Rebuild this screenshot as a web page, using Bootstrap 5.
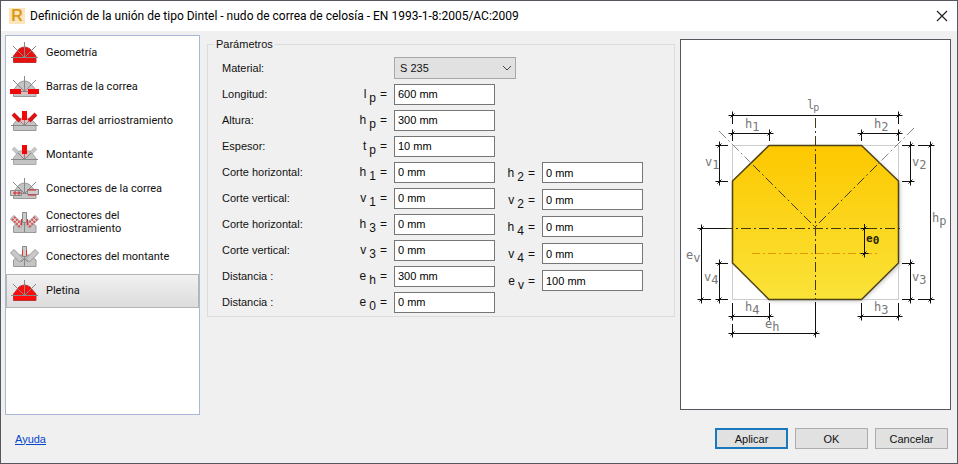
<!DOCTYPE html>
<html lang="es">
<head>
<meta charset="utf-8">
<meta name="viewport" content="width=device-width, initial-scale=1">
<title>Definición de la unión</title>
<link href="https://cdn.jsdelivr.net/npm/bootstrap@5.3.0/dist/css/bootstrap.min.css" rel="stylesheet">
<style>
  body { font-family: "Liberation Sans", Arial, sans-serif; font-size: 11px; line-height: 14px; color: #111; background: #f0f0f0; }
  .dialog { min-height: 100vh; border: 1px solid #55565e; background: #f0f0f0; }
  .titlebar { height: 30px; background: #fff; padding: 0 9px 0 8px; }
  .app-logo { width: 16px; height: 16px; background: #fbe6bb; color: #dd9a1c; font-size: 16px; line-height: 16px; }
  .window-title { font-family: Roboto, "Open Sans", sans-serif; font-size: 12px; line-height: 18px; color: #000; padding-left: 5px; }
  .close-btn { line-height: 0; }
  .workspace { padding: 4px 6px 0 4px; }
  .sections { width: 195px; height: 380px; background: #fff; border: 1px solid #a9b8d6; font-family: Roboto, "Open Sans", sans-serif; }
  .sections .list-group-item { height: 34px; padding: 0 8px 2px 2px; gap: 7px; border: 1px solid transparent; background: none; color: #111; font-size: 11px; line-height: 13px; }
  .sections .list-group-item.selected { background: linear-gradient(#f1f1f1, #dcdcdc); border-color: #b4b4b4; }
  .section-icon { width: 30px; height: 24px; }
  .params { margin: 3px 5px 0 7px; height: 279px; border: 1px solid #dcdcdc; padding: 0 0 0 14px; }
  .params legend { float: none; width: auto; font-size: 11px; line-height: 12px; margin: -6px 0 5px -8px; padding: 0 2px; background: #f0f0f0; }
  .param-row { height: 26px; }
  .param-name { width: 123px; }
  .param-symbol { width: 42px; font-size: 12px; gap: 3px; }
  .param-symbol .idx { margin: 4px 1px -4px 0; }
  .second-fields { padding-top: 78px; margin-left: 9px; }
  .second-fields .param-row { height: 27px; }
  .second-fields .param-symbol { width: 31px; }
  .dialog .form-control { width: 101px; height: 21px; padding: 0 3px; border: 1px solid #767676; border-radius: 0; font-size: 11px; line-height: 14px; color: #000; background: #fff; }
  .param-row .form-control, .material-box { margin-left: 3px; }
  .material-box { width: 122px; }
  .dialog .form-select { height: 22px; padding: 0 20px 0 5px; border: 1px solid #a8a8a8; border-radius: 0; background: #e1e1e1; font-size: 11px; line-height: 14px; color: #111; }
  .select-arrow { right: 4px; top: 8px; pointer-events: none; }
  .preview { width: 271px; margin-top: 4px; height: 371px; background: #fff; border: 1px solid #55565e; }
  .preview text { font-family: "DejaVu Sans Mono", monospace; font-size: 12px; fill: #777; }
  .preview .strong-label { font-size: 11px; font-weight: bold; fill: #2a2400; }
  .preview .dim { stroke: #111; fill: none; }
  .footer-bar { padding: 13px 9px 13px 14px; }
  .footer-bar a { color: #0645c8; }
  .footer-buttons { gap: 7px; }
  .footer-bar .btn { width: 73px; height: 21px; padding: 0; border: 1px solid #adadad; border-radius: 0; background: #e1e1e1; font-size: 11px; line-height: 14px; color: #111; }
  .footer-bar .btn.default { border: 2px solid #1a78bd; }
</style>
<script src="https://cdn.jsdelivr.net/npm/bootstrap@5.3.0/dist/js/bootstrap.bundle.min.js"></script>
</head>
<body>
<svg class="d-none" aria-hidden="true">
  <defs>
    <path id="body-shape" d="M4.500 22.500V16L10 9Q15.500 5 21 9L27 16V22.500Z"/>
    <path id="axes" d="M2 17.500H29M15.500 2V18M4 6L15 17M27 6L16 17" fill="none" stroke="#888"/>
    <path id="tick" d="M-4 0H4M0 -4V4M-2 2L2 -2" fill="none" stroke="#111"/>
  </defs>
</svg>
<div class="dialog d-flex flex-column">
  <header class="titlebar d-flex align-items-center">
    <span class="app-logo fw-bold text-center" aria-hidden="true">R</span>
    <h1 class="window-title fw-normal mb-0 flex-grow-1">Definición de la unión de tipo Dintel - nudo de correa de celosía - EN 1993-1-8:2005/AC:2009</h1>
    <button type="button" class="close-btn border-0 bg-transparent p-0" aria-label="Cerrar">
      <svg width="12" height="12" viewBox="0 0 12 12"><path d="M1 1L11 11M11 1L1 11" stroke="#222" stroke-width="1.200"/></svg>
    </button>
  </header>

  <main class="workspace d-flex align-items-start">
    <nav class="sections list-group rounded-0 flex-shrink-0">
      <button type="button" class="list-group-item list-group-item-action d-flex align-items-center">
        <svg class="section-icon flex-shrink-0" viewBox="0 0 30 24"><use href="#body-shape" fill="#e80f0f" stroke="#b33"/><use href="#axes"/></svg>Geometría</button>
      <button type="button" class="list-group-item list-group-item-action d-flex align-items-center">
        <svg class="section-icon flex-shrink-0" viewBox="0 0 30 24"><use href="#body-shape" fill="#c4c4c4" stroke="#999"/><path d="M10 15h11v5H10z" fill="#e9b9b9"/><use href="#axes"/><path d="M1 15h11v5H1zM19 15h11v5H19z" fill="#f00808"/></svg>Barras de la correa</button>
      <button type="button" class="list-group-item list-group-item-action d-flex align-items-center">
        <svg class="section-icon flex-shrink-0" viewBox="0 0 30 24"><path d="M4.500 22.500V16L8 12L15.500 9L23 12L27 16V22.500Z" fill="#c4c4c4" stroke="#999"/><path d="M9 13L15.500 9L22 13L15.500 17Z" fill="#eab8b8"/><path d="M2 17.500H29M15.500 10V18M9 11L15 17M22 11L16 17" stroke="#888" fill="none"/><path d="M13 3h5v9h-5z" fill="#f00808"/><path d="M4 6L11 13M27 6L20 13" stroke="#d91313" stroke-width="4"/></svg>Barras del arriostramiento</button>
      <button type="button" class="list-group-item list-group-item-action d-flex align-items-center">
        <svg class="section-icon flex-shrink-0" viewBox="0 0 30 24"><path d="M4 6L11 13M27 6L20 13" stroke="#c6c6c6" stroke-width="4"/><path d="M4.500 22.500V16L10 9H21L27 16V22.500Z" fill="#c4c4c4" stroke="#aaa"/><path d="M12 12h7v3h-7z" fill="#eab8b8"/><path d="M2 17.500H29M15.500 10V18M9 11L15 17M22 11L16 17" stroke="#888" fill="none"/><path d="M13 3h5v9h-5z" fill="#f00808"/></svg>Montante</button>
      <button type="button" class="list-group-item list-group-item-action d-flex align-items-center">
        <svg class="section-icon flex-shrink-0" viewBox="0 0 30 24"><use href="#body-shape" fill="#c4c4c4" stroke="#999"/><use href="#axes"/><path d="M1.500 14.500h11v5h-11zM18.500 13.500h11v5h-11z" fill="#ccc" stroke="#888"/><path d="M4 17h4M6 15v4M8 17h4M10 15v4M19 14h8M19 19h8" stroke="#d5222b"/></svg>Conectores de la correa</button>
      <button type="button" class="list-group-item list-group-item-action d-flex align-items-center">
        <svg class="section-icon flex-shrink-0" viewBox="0 0 30 24"><path d="M4.500 22.500V16L10 11H21L27 16V22.500Z" fill="#c4c4c4" stroke="#999"/><path d="M1.500 9L5 5.500L14 14.500L10.500 18ZM29.500 9L26 5.500L17 14.500L20.500 18Z" fill="#ddd" stroke="#999"/><path d="M3 9L11 17M5 7L13 15M28 9L20 17M26 7L18 15" stroke="#d84a50" stroke-width="2" stroke-dasharray="2 1"/><path d="M13.500 2.500h4v10h-4z" fill="#ccc" stroke="#888"/><path d="M12.500 9v6M18.500 9v6" stroke="#d33"/><path d="M15.500 13V22" stroke="#888"/></svg>Conectores del arriostramiento</button>
      <button type="button" class="list-group-item list-group-item-action d-flex align-items-center">
        <svg class="section-icon flex-shrink-0" viewBox="0 0 30 24"><path d="M4.500 22.500V16L10 11H21L27 16V22.500Z" fill="#c4c4c4" stroke="#999"/><path d="M1.500 9L5 5.500L14 14.500L10.500 18ZM29.500 9L26 5.500L17 14.500L20.500 18Z" fill="#c8c8c8" stroke="#999"/><path d="M13.500 2.500h4v10h-4z" fill="#ccc" stroke="#888"/><path d="M13.500 6v6M17.500 6v6" stroke="#d33"/><path d="M15.500 13V22M12 18l3.500-3.500L19 18" fill="none" stroke="#888"/></svg>Conectores del montante</button>
      <button type="button" class="list-group-item list-group-item-action selected d-flex align-items-center" aria-current="true">
        <svg class="section-icon flex-shrink-0" viewBox="0 0 30 24"><use href="#body-shape" fill="#ff0a0a" stroke="#b33"/><use href="#axes"/></svg>Pletina</button>
    </nav>

    <fieldset class="params flex-grow-1">
      <legend>Parámetros</legend>
      <div class="param-row d-flex align-items-center"><label class="param-name" for="material">Material:</label><span class="param-symbol me-1"></span>
        <div class="material-box position-relative"><select id="material" class="form-select"><option>S 235</option></select>
          <svg class="select-arrow position-absolute" width="10" height="7" viewBox="0 0 10 7"><path d="M1 1L5 5L9 1" fill="none" stroke="#444"/></svg></div></div>
      <div class="d-flex align-items-start">
        <div>
          <div class="param-row d-flex align-items-center"><label class="param-name" for="lp">Longitud:</label><span class="param-symbol d-flex justify-content-end me-1"><span>l</span><span class="idx">p</span><span>=</span></span><input id="lp" class="form-control" value="600 mm"></div>
          <div class="param-row d-flex align-items-center"><label class="param-name" for="hp">Altura:</label><span class="param-symbol d-flex justify-content-end me-1"><span>h</span><span class="idx">p</span><span>=</span></span><input id="hp" class="form-control" value="300 mm"></div>
          <div class="param-row d-flex align-items-center"><label class="param-name" for="tp">Espesor:</label><span class="param-symbol d-flex justify-content-end me-1"><span>t</span><span class="idx">p</span><span>=</span></span><input id="tp" class="form-control" value="10 mm"></div>
          <div class="param-row d-flex align-items-center"><label class="param-name" for="h1">Corte horizontal:</label><span class="param-symbol d-flex justify-content-end me-1"><span>h</span><span class="idx">1</span><span>=</span></span><input id="h1" class="form-control" value="0 mm"></div>
          <div class="param-row d-flex align-items-center"><label class="param-name" for="v1">Corte vertical:</label><span class="param-symbol d-flex justify-content-end me-1"><span>v</span><span class="idx">1</span><span>=</span></span><input id="v1" class="form-control" value="0 mm"></div>
          <div class="param-row d-flex align-items-center"><label class="param-name" for="h3">Corte horizontal:</label><span class="param-symbol d-flex justify-content-end me-1"><span>h</span><span class="idx">3</span><span>=</span></span><input id="h3" class="form-control" value="0 mm"></div>
          <div class="param-row d-flex align-items-center"><label class="param-name" for="v3">Corte vertical:</label><span class="param-symbol d-flex justify-content-end me-1"><span>v</span><span class="idx">3</span><span>=</span></span><input id="v3" class="form-control" value="0 mm"></div>
          <div class="param-row d-flex align-items-center"><label class="param-name" for="eh">Distancia :</label><span class="param-symbol d-flex justify-content-end me-1"><span>e</span><span class="idx">h</span><span>=</span></span><input id="eh" class="form-control" value="300 mm"></div>
          <div class="param-row d-flex align-items-center"><label class="param-name" for="e0">Distancia :</label><span class="param-symbol d-flex justify-content-end me-1"><span>e</span><span class="idx">0</span><span>=</span></span><input id="e0" class="form-control" value="0 mm"></div>
        </div>
        <div class="second-fields flex-shrink-0">
          <div class="param-row d-flex align-items-center"><label class="param-symbol d-flex justify-content-end me-1" for="h2"><span>h</span><span class="idx">2</span><span>=</span></label><input id="h2" class="form-control" value="0 mm"></div>
          <div class="param-row d-flex align-items-center"><label class="param-symbol d-flex justify-content-end me-1" for="v2"><span>v</span><span class="idx">2</span><span>=</span></label><input id="v2" class="form-control" value="0 mm"></div>
          <div class="param-row d-flex align-items-center"><label class="param-symbol d-flex justify-content-end me-1" for="h4"><span>h</span><span class="idx">4</span><span>=</span></label><input id="h4" class="form-control" value="0 mm"></div>
          <div class="param-row d-flex align-items-center"><label class="param-symbol d-flex justify-content-end me-1" for="v4"><span>v</span><span class="idx">4</span><span>=</span></label><input id="v4" class="form-control" value="0 mm"></div>
          <div class="param-row d-flex align-items-center"><label class="param-symbol d-flex justify-content-end me-1" for="ev"><span>e</span><span class="idx">v</span><span>=</span></label><input id="ev" class="form-control" value="100 mm"></div>
        </div>
      </div>
    </fieldset>

    <div class="preview flex-shrink-0">
      <svg class="d-block w-100 h-100" viewBox="681 40 269 369" role="img" aria-label="Esquema de la pletina">
        <defs>
          <linearGradient id="plate" x1="0" y1="0" x2="0" y2="1"><stop offset="0" stop-color="#fdc800"/><stop offset="1" stop-color="#fae338"/></linearGradient>
          <filter id="soft" x="-10%" y="-10%" width="120%" height="120%"><feGaussianBlur stdDeviation="2"/></filter>
        </defs>
        <path d="M770 147H862L900 183V265L862 301H770L734 265V183Z" fill="#999" opacity=".6" filter="url(#soft)"/>
        <path d="M732.500 145.500V181L769 145.500ZM732.500 299.500V263L769 299.500Z" fill="#fff"/>
        <path d="M732.500 145.500H898.500V299.500H732.500Z" fill="none" stroke="#ccc"/>
        <path d="M769 145.500H861.500L898.500 181V263L861.500 299.500H769L732.500 263V181Z" fill="url(#plate)" stroke="#4d4215" stroke-width="1.500"/>
        <path d="M719 131L753 165M914 128L877 165" stroke="#888" stroke-dasharray="10 3 2 3"/>
        <path d="M753 165L815 227M877 165L815 227" stroke="#443a10" stroke-dasharray="10 3 2 3"/>
        <path d="M815.500 118V299M723 228.500H903" stroke="#443a10" stroke-dasharray="10 3 2 3"/>
        <path d="M752 253.500H877" stroke="#e29a00" stroke-dasharray="8 3 2 3"/>
        <path class="dim" d="M732.500 115.500H898.500M732.500 115V124M898.500 115V124M732.500 133.500H769.500M861.500 133.500H898.500M732.500 130V141M769.500 130V141M861.500 130V141M898.500 130V141
          M719.500 145V181M716 145.500H728M716 181.500H728M910.500 145V181M902 145.500H913M902 181.500H913M930.500 145V299M918 145.500H934M918 299.500H934
          M719.500 263V299M716 263.500H728M716 299.500H728M701.500 228V299M699 228.500H726M699 299.500H711M910.500 263V299M902 263.500H913M902 299.500H913
          M732.500 316.500H769.500M861.500 316.500H898.500M732.500 303V319M732.500 324V336M769.500 303V319M861.500 303V319M898.500 303V319M732.500 333.500H815.500M815.500 302V336M864.500 224V257"/>
        <g><use href="#tick" x="732.500" y="115.500"/><use href="#tick" x="898.500" y="115.500"/><use href="#tick" x="732.500" y="133.500"/><use href="#tick" x="769.500" y="133.500"/><use href="#tick" x="861.500" y="133.500"/><use href="#tick" x="898.500" y="133.500"/>
        <use href="#tick" x="719.500" y="145.500"/><use href="#tick" x="719.500" y="181.500"/><use href="#tick" x="910.500" y="145.500"/><use href="#tick" x="910.500" y="181.500"/><use href="#tick" x="930.500" y="145.500"/><use href="#tick" x="930.500" y="299.500"/>
        <use href="#tick" x="719.500" y="263.500"/><use href="#tick" x="719.500" y="299.500"/><use href="#tick" x="701.500" y="228.500"/><use href="#tick" x="701.500" y="299.500"/><use href="#tick" x="910.500" y="263.500"/><use href="#tick" x="910.500" y="299.500"/>
        <use href="#tick" x="732.500" y="316.500"/><use href="#tick" x="769.500" y="316.500"/><use href="#tick" x="861.500" y="316.500"/><use href="#tick" x="898.500" y="316.500"/><use href="#tick" x="732.500" y="333.500"/><use href="#tick" x="815.500" y="333.500"/><use href="#tick" x="864.500" y="228.500"/><use href="#tick" x="864.500" y="253.500"/></g>
        <text x="807" y="109">l<tspan font-size="10" dx="-1" dy="2">p</tspan></text>
        <text x="745" y="128">h<tspan dy="3">1</tspan></text>
        <text x="874" y="128">h<tspan dy="3">2</tspan></text>
        <text x="705" y="166">v<tspan dy="3">1</tspan></text>
        <text x="912" y="166">v<tspan dy="3">2</tspan></text>
        <text x="932" y="222">h<tspan dy="3">p</tspan></text>
        <text x="686" y="259">e<tspan dy="3">v</tspan></text>
        <text x="704" y="281">v<tspan dy="3">4</tspan></text>
        <text x="912" y="281">v<tspan dy="3">3</tspan></text>
        <text x="745" y="311">h<tspan dy="3">4</tspan></text>
        <text x="874" y="311">h<tspan dy="3">3</tspan></text>
        <text x="765" y="328">e<tspan dy="3">h</tspan></text>
        <text x="866" y="242" class="strong-label">e<tspan dy="2">0</tspan></text>
      </svg>
    </div>
  </main>

  <footer class="footer-bar d-flex align-items-center">
    <a href="#" class="me-auto">Ayuda</a>
    <div class="footer-buttons d-flex">
      <button type="button" class="btn default">Aplicar</button>
      <button type="button" class="btn">OK</button>
      <button type="button" class="btn">Cancelar</button>
    </div>
  </footer>
</div>
</body>
</html>
